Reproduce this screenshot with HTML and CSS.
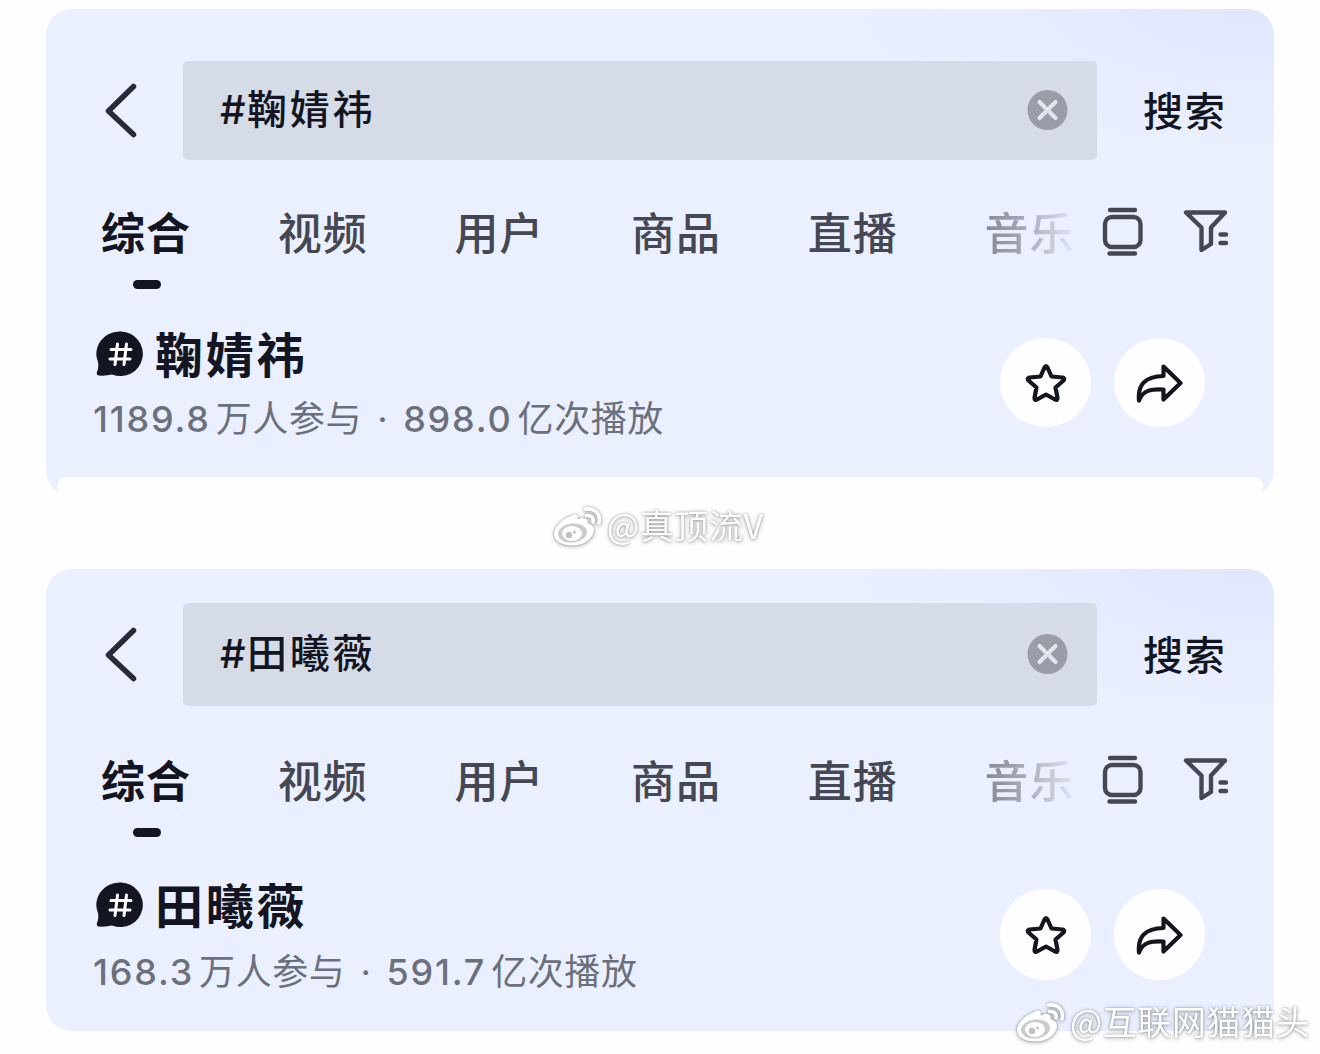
FILE: index.html
```
<!DOCTYPE html>
<html lang="zh-CN">
<head>
    <meta charset="UTF-8">
    <title>搜索</title>
    <link rel="stylesheet" href="styles.css">
</head>
<body>
    <svg class="symbols" width="0" height="0">
        <symbol id="back" viewBox="0 0 34 56">
            <path d="M29.5 3.500L4.500 28L29.500 51.500" fill="none" stroke="#292b38" stroke-width="5.500" stroke-linecap="round" stroke-linejoin="round"/>
        </symbol>
        <symbol id="clear" viewBox="0 0 40 40">
            <circle cx="20" cy="20" r="20" fill="#9a9da8"/>
            <path d="M12 12L28 28M28 12L12 28" stroke="#e3e6ef" stroke-width="4.200" stroke-linecap="round"/>
        </symbol>
        <symbol id="layout" viewBox="0 0 41 50">
            <g fill="none" stroke="#454853" stroke-width="4.400" stroke-linecap="round">
                <path d="M8 3H33M7.500 46.500H33"/>
                <rect x="3" y="10" width="35.500" height="30" rx="7"/>
            </g>
        </symbol>
        <symbol id="filter" viewBox="0 0 47 46">
            <path d="M3 4.500H42L28 19.500V36L18.500 42V19.500ZM37.500 26.500H43M37.500 35H43" fill="none" stroke="#454853" stroke-width="4.400" stroke-linecap="round" stroke-linejoin="round"/>
        </symbol>
        <symbol id="topic" viewBox="0 0 48 46">
            <path d="M25 0.500A22.500 22.300 0 1 1 16 43.500Q10 45 2.500 44.500Q0 44 1 41Q3 37 2 31A23.500 22.300 0 0 1 25 0.500Z" fill="#131622"/>
            <path d="M21.500 13L19 33.500M30.500 13L28 33.500M15 18.500H35M14 28H34" stroke="#fff" stroke-width="3" stroke-linecap="round"/>
        </symbol>
        <symbol id="star" viewBox="0 0 42 40">
            <path d="M19.500 4.500Q21 1.500 22.500 4.500L26.500 13.500L37.500 14.500Q40.500 15.500 38.500 17.500L30.500 24.500L32.500 35Q32.500 38 30 36.500L21 31.500L12 36.500Q9.500 38 9.500 35L11.500 24.500L3.500 17.500Q1.500 15.500 4.500 14.500L15.500 13.500Z" fill="none" stroke="#14161f" stroke-width="4.200" stroke-linejoin="round"/>
        </symbol>
        <symbol id="share" viewBox="0 0 50 40">
            <path d="M28.500 3.500L45.500 20L28.500 36.500V26.500C16 26 8 27 4 37.500C2.500 22 9.500 13.500 28.500 13Z" fill="none" stroke="#14161f" stroke-width="4.200" stroke-linejoin="round"/>
        </symbol>
        <symbol id="weibo" viewBox="0 0 50 42">
            <path d="M18 10C23 7 26 9 24.500 13.500C29 11 36 11 34.500 17C40 18.500 42 22 40.500 27C38 35 29 39.500 19 39.500C9 39.500 1 35 1 28C1 21 9 13 18 10Z" fill="#fff"/>
            <ellipse cx="19.500" cy="27" rx="14.500" ry="9.500" transform="rotate(-7 19.500 27)" fill="#c9cbcf"/>
            <ellipse cx="19" cy="27.500" rx="10" ry="7.500" fill="#fff"/>
            <circle cx="16" cy="29" r="3.200" fill="#bfc1c5"/>
            <circle cx="21.500" cy="26" r="1.500" fill="#bfc1c5"/>
            <path d="M32.500 3C42 2 48 8 46 17M33.500 9.500C38 9 41 12 40 16" fill="none" stroke="#fff" stroke-width="3.600" stroke-linecap="round"/>
        </symbol>
    </svg>

    <div class="card card-first">
        <div class="search-row">
            <svg class="back"><use href="#back"/></svg>
            <div class="search-box">
                <span class="keyword"><span class="hash">#</span>鞠婧祎</span>
                <svg class="clear"><use href="#clear"/></svg>
            </div>
            <span class="search-btn">搜索</span>
        </div>
        <div class="tabs">
            <div class="tab active">综合</div>
            <div class="tab">视频</div>
            <div class="tab">用户</div>
            <div class="tab">商品</div>
            <div class="tab">直播</div>
            <div class="tab fade">音乐</div>
            <svg class="layout"><use href="#layout"/></svg>
            <svg class="filter"><use href="#filter"/></svg>
        </div>
        <div class="topic">
            <div class="topic-info">
                <div class="topic-title"><svg><use href="#topic"/></svg>鞠婧祎</div>
                <div class="topic-stats"><b>1189.8</b>万人参与<span class="dot">·</span><b>898.0</b>亿次播放</div>
            </div>
            <div class="actions">
                <div class="action"><svg class="star"><use href="#star"/></svg></div>
                <div class="action"><svg class="share"><use href="#share"/></svg></div>
            </div>
        </div>
        <div class="sheet"></div>
    </div>

    <div class="card card-second">
        <div class="search-row">
            <svg class="back"><use href="#back"/></svg>
            <div class="search-box">
                <span class="keyword"><span class="hash">#</span>田曦薇</span>
                <svg class="clear"><use href="#clear"/></svg>
            </div>
            <span class="search-btn">搜索</span>
        </div>
        <div class="tabs">
            <div class="tab active">综合</div>
            <div class="tab">视频</div>
            <div class="tab">用户</div>
            <div class="tab">商品</div>
            <div class="tab">直播</div>
            <div class="tab fade">音乐</div>
            <svg class="layout"><use href="#layout"/></svg>
            <svg class="filter"><use href="#filter"/></svg>
        </div>
        <div class="topic">
            <div class="topic-info">
                <div class="topic-title"><svg><use href="#topic"/></svg>田曦薇</div>
                <div class="topic-stats"><b>168.3</b>万人参与<span class="dot">·</span><b>591.7</b>亿次播放</div>
            </div>
            <div class="actions">
                <div class="action"><svg class="star"><use href="#star"/></svg></div>
                <div class="action"><svg class="share"><use href="#share"/></svg></div>
            </div>
        </div>
    </div>

    <div class="watermark mark-middle"><svg><use href="#weibo"/></svg><span>@真顶流V</span></div>
    <div class="watermark mark-corner"><svg><use href="#weibo"/></svg><span>@互联网猫猫头</span></div>
</body>
</html>
```
FILE: styles.css
```
body {
    margin: 0;
    padding: 9px 46px 0;
    height: 1054px;
    position: relative;
    overflow: hidden;
    background-color: #fefefe;
    color: #131622;
    font-family: "Noto Sans CJK SC", sans-serif;
    box-sizing: border-box;
}

svg {
    display: block;
    flex: none;
}

.symbols {
    position: absolute;
}

.card {
    border-radius: 26px;
    background: radial-gradient(ellipse 430px 140px at 100% 0, #e0e7fd, rgba(227, 233, 254, 0.6) 50%, rgba(234, 240, 255, 0)), #eaf0ff;
    box-sizing: border-box;
    display: flex;
    flex-direction: column;
    overflow: hidden;
}

.card-first {
    height: 487px;
    padding-top: 52px;
}

.card-second {
    height: 462px;
    margin-top: 73px;
    padding-top: 34px;
}

.search-row {
    display: flex;
    align-items: center;
    height: 99px;
    padding-left: 58px;
}

.card-second .search-row {
    height: 103px;
}

.back {
    width: 34px;
    height: 56px;
}

.search-box {
    display: flex;
    align-items: center;
    justify-content: space-between;
    width: 914px;
    height: 100%;
    margin-left: 45px;
    padding: 0 29px 0 37px;
    box-sizing: border-box;
    border-radius: 5px;
    background-color: #d5dbe7;
}

.keyword,
.search-btn {
    padding-bottom: 4px;
    font-size: 40px;
    font-weight: 500;
    line-height: 60px;
    letter-spacing: 2.8px;
    white-space: nowrap;
}

.hash {
    display: inline-block;
    width: 27px;
    font-family: Inter, sans-serif;
    letter-spacing: 0;
}

.clear {
    width: 41px;
    height: 40px;
    margin-bottom: 2px;
}

.search-btn {
    margin-left: 46px;
    letter-spacing: 1.8px;
}

.tabs {
    display: flex;
    height: 85px;
    margin-top: 43px;
    padding-left: 55px;
}

.card-second .tabs {
    height: 86px;
    margin-top: 45px;
}

.tab {
    width: 176.7px;
    font-size: 44px;
    font-weight: 500;
    line-height: 56px;
    letter-spacing: 1px;
    color: #454853;
}

.tab.active {
    font-weight: 700;
    color: #131622;
}

.tab.active::after {
    content: "";
    display: block;
    width: 28px;
    height: 9px;
    margin: 21px 0 0 32px;
    border-radius: 5px;
    background-color: #131622;
}

.tab.fade {
    width: 90px;
    height: 60px;
    background: linear-gradient(90deg, #858995, #a6aab6 45%, #e0e5f2);
    background-clip: text;
    color: transparent;
}

.layout {
    width: 41px;
    height: 50px;
    margin: 4px 0 0 28px;
}

.filter {
    width: 47px;
    height: 46px;
    margin: 5px 0 0 40px;
}

.topic {
    display: flex;
    justify-content: space-between;
    height: 120px;
    margin-top: 36px;
    padding: 0 69px 0 47px;
    flex: none;
}

.card-second .topic {
    margin-top: 38px;
}

.topic-title {
    display: flex;
    align-items: center;
    font-size: 48px;
    font-weight: 700;
    line-height: 56px;
    letter-spacing: 2.7px;
}

.topic-title svg {
    width: 48px;
    height: 46px;
    margin: 4px 11px 0 3px;
}

.topic-stats {
    margin-top: 11px;
    font-size: 36px;
    line-height: 50px;
    letter-spacing: 0.6px;
    color: #6b707c;
    white-space: nowrap;
}

.card-second .topic-stats {
    margin-top: 13px;
}

.topic-stats b {
    font-family: Inter, sans-serif;
    font-weight: 500;
    letter-spacing: 1.8px;
    margin-right: 5px;
}

.dot {
    display: inline-block;
    width: 41px;
    font-family: Inter, sans-serif;
    text-align: center;
}

.actions {
    display: flex;
    gap: 23px;
    margin-top: 14px;
}

.action {
    display: flex;
    align-items: center;
    justify-content: center;
    width: 91px;
    height: 89px;
    border-radius: 50%;
    background-color: #fefefe;
}

.card-second .action {
    height: 91px;
}

.star {
    width: 42px;
    height: 40px;
}

.share {
    width: 50px;
    height: 40px;
}

.sheet {
    height: 19px;
    margin: auto 11px 0;
    border-radius: 9px;
    background-color: #fefefe;
}

/* watermarks lie over the cards */
.watermark {
    position: absolute;
    display: flex;
    align-items: center;
    gap: 4px;
    color: #fff;
    font-size: 34px;
    line-height: 40px;
    letter-spacing: 0.6px;
    white-space: nowrap;
    filter: drop-shadow(0 0 1px rgba(0, 0, 0, 0.3)) drop-shadow(0 1px 2px rgba(0, 0, 0, 0.3));
}

.watermark svg {
    width: 50px;
    height: 42px;
}

.watermark span {
    padding-bottom: 3px;
}

.mark-middle {
    left: 553px;
    top: 505px;
}

.mark-corner {
    left: 1016px;
    top: 1001px;
}
```
